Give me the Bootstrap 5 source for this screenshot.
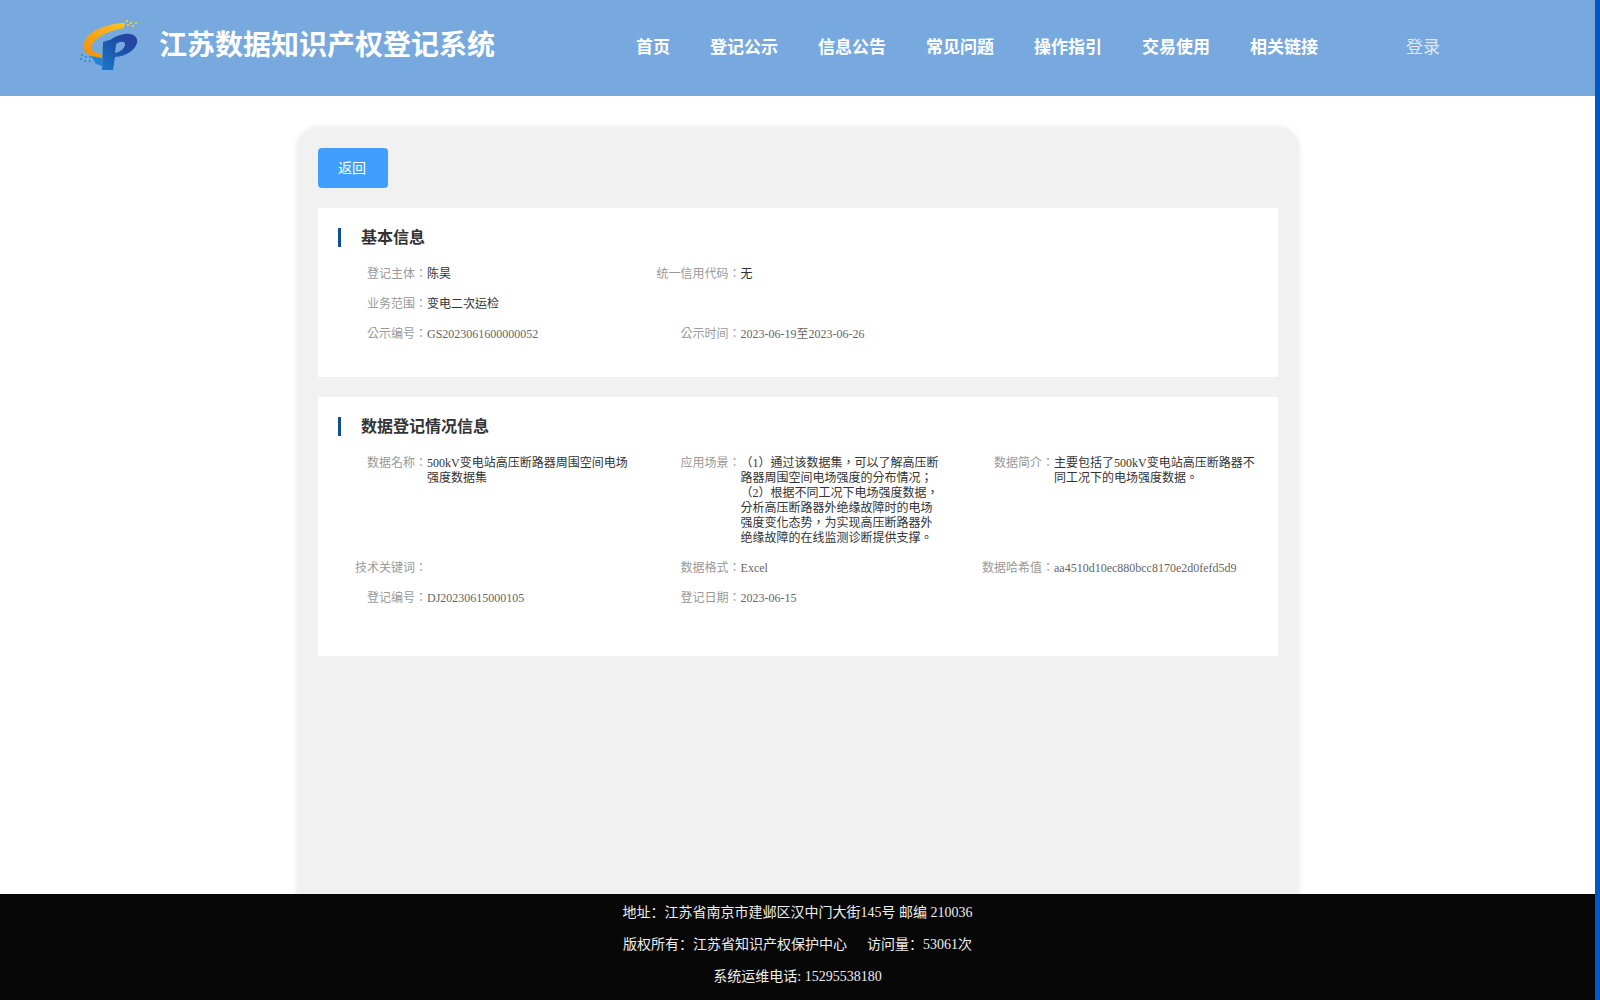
<!DOCTYPE html>
<html lang="zh-CN">
<head>
<meta charset="utf-8">
<title>江苏数据知识产权登记系统</title>
<link href="https://cdn.jsdelivr.net/npm/bootstrap@5.3.0/dist/css/bootstrap.min.css" rel="stylesheet">
<style>
html, body { height: 1000px; overflow: hidden; }
body { font-family: "Liberation Serif", "Noto Sans CJK SC", serif; font-size: 12px; background: #fff; }
.page-shell { height: 1000px; }
.page-main { width: 1595px; min-width: 0; height: 1000px; }
.scroll-strip { width: 5px; background: #0058c6; }
.site-head { height: 96px; background: #78a9de; flex: none; }
.brand-zone { padding-left: 80px; width: 636px; padding-bottom: 4px; }
.brand-logo { width: 60px; height: 50px; margin-top: -2px; }
.brand-name { font-size: 28px; font-weight: 700; color: #fff; margin-left: 19px; white-space: nowrap; line-height: 1; }
.head-nav { gap: 40px; }
.head-nav a { font-size: 17px; font-weight: 700; color: #fff; text-decoration: none; white-space: nowrap; }
.head-login { margin-left: 88px; font-size: 17px; color: rgba(255,255,255,.75); text-decoration: none; }
.content-zone { min-height: 0; overflow: hidden; padding-top: 32px; }
.sheet { width: 1000px; min-height: 820px; margin-left: 298px; padding: 20px; background: #f1f1f1; border-radius: 20px; box-shadow: 0 0 6px rgba(0,0,0,.12); }
.back-btn { width: 70px; height: 40px; background: #409eff; color: #fff; font-size: 14px; border-radius: 4px; border: 0; padding: 0 2px 0 0; margin-bottom: 20px; display: block; }
.back-btn:hover { background: #409eff; color: #fff; }
.info-block { background: #fff; padding: 20px; margin-bottom: 20px; }
.info-block.tall { padding-bottom: 35px; }
.info-title { font-size: 16px; font-weight: 700; color: #333; border-left: 3px solid #0f4f96; padding-left: 20px; height: 19px; line-height: 19px; margin-bottom: 20px; }
.info-grid { display: grid; grid-template-columns: 313.6px 313.4px 313px; margin-left: -31px; width: 940px; font-family: "Liberation Serif", "Noto Sans CJK TC", serif; }
.info-item { display: flex; line-height: 15px; margin-bottom: 15px; min-width: 0; }
.info-key { width: 120px; flex: none; text-align: right; color: #999; white-space: nowrap; }
.info-val { width: 203px; flex: none; color: #333; }
.info-val.soft { color: #666; }
.span-all { grid-column: 1 / -1; }
.site-foot { height: 106px; flex: none; background: #070707; color: #eee; font-size: 14px; text-align: center; line-height: 32px; padding-top: 3px; }
.foot-gap { margin-left: 20px; }
</style>
</head>
<body>
<div class="page-shell d-flex">
  <div class="page-main d-flex flex-column">
    <header class="site-head d-flex align-items-center">
      <div class="brand-zone d-flex align-items-center">
        <svg class="brand-logo" viewBox="0 0 60 50" xmlns="http://www.w3.org/2000/svg" aria-hidden="true">
          <defs>
            <linearGradient id="arcG" x1="0" y1="1" x2="1" y2="0">
              <stop offset="0" stop-color="#f08a10"/>
              <stop offset="1" stop-color="#fbc51e"/>
            </linearGradient>
            <linearGradient id="pG" x1="0" y1="1" x2="1" y2="0">
              <stop offset="0" stop-color="#1a78c8"/>
              <stop offset=".6" stop-color="#1c4fa8"/>
              <stop offset="1" stop-color="#2a3f9c"/>
            </linearGradient>
          </defs>
          <path d="M45 3C30 3 10 10 5 20C1 28 4 36 22 40L22 34C14 33 10 30 12 25C15 17 30 10 44 8Z" fill="url(#arcG)"/>
          <path d="M23 22L31 19.500C36 16 44 13 50 14C56 15 58 19 57 23C55 30 47 36 35 37L33 50L22 50Z M36 24L35 33C40 32 44 29 45 25C46 21 40 21 36 24Z" fill="url(#pG)" fill-rule="evenodd"/>
          <path d="M11 36L22 38L22 46L16 44Z" fill="#1f86d2"/>
          <g fill="#f6c92c">
            <rect x="46" y="0" width="2" height="2"/><rect x="50" y="2" width="2" height="2"/><rect x="55" y="2" width="2" height="2"/><rect x="47" y="4" width="2" height="2"/><rect x="52" y="5" width="2" height="2"/>
          </g>
          <g fill="#3d8fd6">
            <rect x="1" y="34" width="2" height="2"/><rect x="5" y="36" width="2" height="2"/><rect x="9" y="36" width="2" height="2"/><rect x="0" y="38" width="2" height="2"/><rect x="4" y="40" width="2" height="2"/><rect x="9" y="40" width="2" height="2"/>
          </g>
        </svg>
        <div class="brand-name">江苏数据知识产权登记系统</div>
      </div>
      <nav class="head-nav d-flex align-items-center">
        <a href="#">首页</a>
        <a href="#">登记公示</a>
        <a href="#">信息公告</a>
        <a href="#">常见问题</a>
        <a href="#">操作指引</a>
        <a href="#">交易使用</a>
        <a href="#">相关链接</a>
      </nav>
      <a class="head-login" href="#">登录</a>
    </header>
    <main class="content-zone flex-grow-1">
      <div class="sheet">
        <button type="button" class="btn back-btn">返回</button>
        <section class="info-block">
          <div class="info-title">基本信息</div>
          <div class="info-grid" lang="zh-Hant">
            <div class="info-item"><div class="info-key">登记主体：</div><div class="info-val">陈昊</div></div>
            <div class="info-item"><div class="info-key">统一信用代码：</div><div class="info-val">无</div></div>
            <div></div>
            <div class="info-item span-all"><div class="info-key">业务范围：</div><div class="info-val">变电二次运检</div></div>
            <div class="info-item"><div class="info-key">公示编号：</div><div class="info-val soft">GS2023061600000052</div></div>
            <div class="info-item"><div class="info-key">公示时间：</div><div class="info-val soft">2023-06-19至2023-06-26</div></div>
          </div>
        </section>
        <section class="info-block tall">
          <div class="info-title">数据登记情况信息</div>
          <div class="info-grid" lang="zh-Hant">
            <div class="info-item"><div class="info-key">数据名称：</div><div class="info-val">500kV变电站高压断路器周围空间电场强度数据集</div></div>
            <div class="info-item"><div class="info-key">应用场景：</div><div class="info-val">（1）通过该数据集，可以了解高压断路器周围空间电场强度的分布情况；（2）根据不同工况下电场强度数据，分析高压断路器外绝缘故障时的电场强度变化态势，为实现高压断路器外绝缘故障的在线监测诊断提供支撑。</div></div>
            <div class="info-item"><div class="info-key">数据简介：</div><div class="info-val">主要包括了500kV变电站高压断路器不同工况下的电场强度数据。</div></div>
            <div class="info-item"><div class="info-key">技术关键词：</div><div class="info-val"></div></div>
            <div class="info-item"><div class="info-key">数据格式：</div><div class="info-val soft">Excel</div></div>
            <div class="info-item"><div class="info-key">数据哈希值：</div><div class="info-val soft">aa4510d10ec880bcc8170e2d0fefd5d9</div></div>
            <div class="info-item"><div class="info-key">登记编号：</div><div class="info-val soft">DJ20230615000105</div></div>
            <div class="info-item"><div class="info-key">登记日期：</div><div class="info-val soft">2023-06-15</div></div>
          </div>
        </section>
      </div>
    </main>
    <footer class="site-foot">
      <div>地址：江苏省南京市建邺区汉中门大街145号 邮编 210036</div>
      <div>版权所有：江苏省知识产权保护中心<span class="foot-gap">访问量：53061次</span></div>
      <div>系统运维电话: 15295538180</div>
    </footer>
  </div>
  <div class="scroll-strip flex-shrink-0"></div>
</div>
<script src="https://cdn.jsdelivr.net/npm/bootstrap@5.3.0/dist/js/bootstrap.bundle.min.js"></script>
</body>
</html>
